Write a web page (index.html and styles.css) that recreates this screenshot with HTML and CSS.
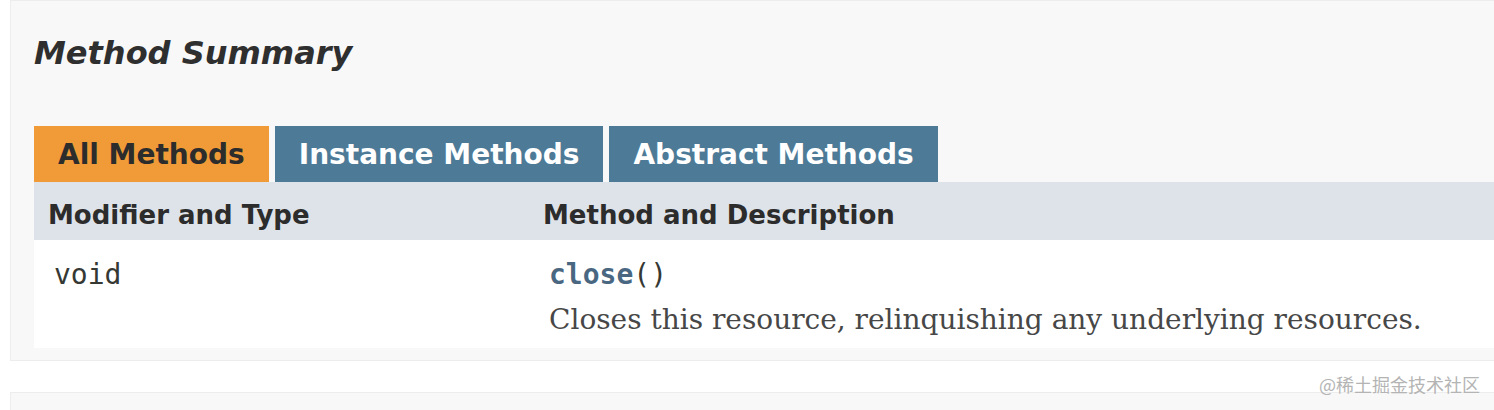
FILE: index.html
```html
<!DOCTYPE html>
<html lang="en">
<head>
<meta charset="utf-8">
<title>Method Summary</title>
<link rel="stylesheet" href="styles.css">
</head>
<body>
<div class="page">
  <section class="summary">
    <h3 class="summary-title">Method Summary</h3>
    <div class="tabs">
      <span class="tab tab-active">All Methods</span>
      <span class="tab">Instance Methods</span>
      <span class="tab">Abstract Methods</span>
    </div>
    <table class="member-table">
      <thead>
        <tr>
          <th class="col-first">Modifier and Type</th>
          <th class="col-last">Method and Description</th>
        </tr>
      </thead>
      <tbody>
        <tr>
          <td class="col-first"><code class="type">void</code></td>
          <td class="col-last">
            <div class="sig"><code><a class="member-link" href="#close">close</a>()</code></div>
            <div class="block">Closes this resource, relinquishing any underlying resources.</div>
          </td>
        </tr>
      </tbody>
    </table>
  </section>
  <section class="summary summary-next"></section>
  <div class="watermark">@稀土掘金技术社区</div>
</div>
</body>
</html>
```

FILE: styles.css
```css
html, body {
  margin: 0;
  padding: 0;
  background: #ffffff;
  overflow: hidden;
}

.page {
  position: relative;
  width: 1494px;
  height: 410px;
  overflow: hidden;
  font-family: "DejaVu Sans", Arial, sans-serif;
  color: #353833;
}

.summary {
  margin-left: 10px;
  width: 1540px;
  background: #f8f8f8;
  border: 1px solid #ededed;
  padding: 0 0 12px 23px;
  box-sizing: border-box;
}

.summary-title {
  margin: 33px 0 54px 0;
  font-size: 32px;
  line-height: 38px;
  font-weight: bold;
  font-style: italic;
  color: #2f2f2f;
}

.tabs {
  display: flex;
  gap: 6px;
}

.tab {
  display: block;
  height: 56px;
  box-sizing: border-box;
  padding: 2px 24px 0 24px;
  line-height: 54px;
  font-size: 28px;
  font-weight: bold;
  color: #ffffff;
  background: #4d7a97;
  white-space: nowrap;
}

.tab-active {
  background: #f09a38;
  color: #2c2c2c;
}

.member-table {
  width: 100%;
  border-collapse: collapse;
  background: #ffffff;
}

.member-table th {
  background: #dee3e9;
  text-align: left;
  font-size: 26px;
  line-height: 30px;
  font-weight: bold;
  color: #2c2c2c;
  padding: 18px 6px 10px 14px;
  white-space: nowrap;
}

.member-table th.col-first {
  width: 475px;
}

.member-table td {
  vertical-align: top;
  padding: 17px 6px 10px 20px;
}

.member-table td.col-first {
  width: 469px;
}

code {
  font-family: "DejaVu Sans Mono", monospace;
  font-size: 28px;
  line-height: 36px;
  color: #353833;
}

.sig {
  line-height: 36px;
  height: 36px;
}

.type {
  display: block;
}

.member-link {
  color: #4a6782;
  font-weight: bold;
  text-decoration: none;
}

.block {
  margin-top: 9px;
  font-family: "DejaVu Serif", Georgia, serif;
  font-size: 28px;
  line-height: 36px;
  color: #474747;
  white-space: nowrap;
}

.summary-next {
  margin-top: 31px;
  height: 60px;
}

.watermark {
  position: absolute;
  right: 14px;
  top: 372px;
  font-family: "Noto Sans CJK SC", "DejaVu Sans", sans-serif;
  font-size: 18px;
  line-height: 24px;
  color: #b4b4b4;
  letter-spacing: 0;
}
```
